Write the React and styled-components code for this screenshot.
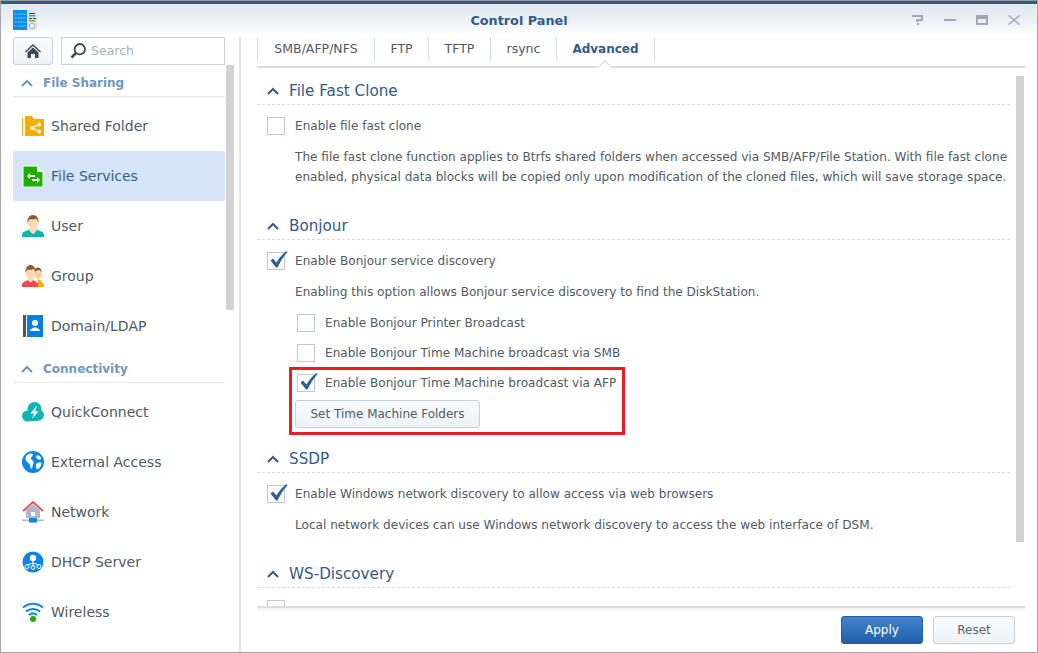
import React from "react";
import styled, { createGlobalStyle } from "styled-components";

const Global = createGlobalStyle`
  html, body { margin: 0; padding: 0; background: #fff; }
  body { font-family: "DejaVu Sans", Verdana, sans-serif; font-size: 12px; color: #505a64; }
  * { box-sizing: border-box; }
`;

const Frame = styled.div`
  width: 1038px; height: 653px; display: flex; flex-direction: column;
  border: 1px solid #a6a6a6; border-top-color: #9a9a9a; overflow: hidden; background: #fff;
`;
const TopBar = styled.div`height: 3px; background: #2c5b8d; flex: none;`;
const Header = styled.header`
  height: 33px; flex: none; position: relative; display: flex; align-items: center;
  padding: 0 17px 1px 12px; justify-content: space-between;
  background: linear-gradient(#e1e8f2, #eef2f7 55%, #ffffff 95%);
`;
const Title = styled.div`
  position: absolute; left: 0; right: 0; top: 9px; text-align: center;
  font-weight: bold; font-size: 12.8px; color: #2f5c8c;
`;
const Logo = styled.svg`width: 24px; height: 20px; display: block; margin-top: -1px;`;
const Controls = styled.div`display: flex; gap: 20px; align-items: center;`;
const Ctl = styled.svg`width: 12px; height: 10px; display: block; color: #a3a9b2;`;

const Body = styled.div`flex: 1; display: flex; min-height: 0;`;
const Side = styled.aside`
  width: 240px; flex: none; display: flex; padding-left: 12px;
  border-right: 2px solid #e6e6e6; overflow: hidden;
`;
const SideCol = styled.div`width: 212px; flex: none; display: flex; flex-direction: column;`;
const SideBar = styled.div`width: 8px; height: 245px; margin: 28px 0 0 1px; background: #d3d3d5; flex: none;`;
const SearchRow = styled.div`display: flex; gap: 8px; height: 28px; flex: none;`;
const HomeBtn = styled.div`
  width: 40px; height: 28px; border: 1px solid #c5d1de; border-radius: 3px;
  background: linear-gradient(#fafcfe, #eef3f8); display: flex; align-items: center; justify-content: center;
`;
const Search = styled.div`
  flex: 1; border: 1px solid #c5d1de; display: flex; align-items: center; gap: 5px;
  padding-left: 8px; color: #a9b0b8; font-size: 12.5px; padding-bottom: 1px;
`;
const SecHead = styled.div`
  height: 32px; flex: none; display: flex; align-items: center; gap: 10px; padding: 5px 0 0 8px;
  border-bottom: 1px solid #e7ebf0; margin-bottom: 4px;
  color: #6f97bd; font-weight: bold; font-size: 12px;
`;
const Item = styled.div`
  height: 50px; flex: none; display: flex; align-items: center; gap: 7px; padding-left: 9px;
  font-size: 14px; border-radius: 3px;
  color: ${p => (p.$active ? "#34608f" : "#505a64")};
  background: ${p => (p.$active ? "#d5e5f7" : "transparent")};
`;
const ItemIcon = styled.svg`width: 22px; height: 22px; display: block; flex: none;`;

const Main = styled.main`flex: 1; min-width: 0; display: flex; flex-direction: column; padding-left: 16px; padding-right: 12px;`;
const Tabs = styled.nav`
  height: 31px; flex: none; display: flex; align-items: flex-start;
  border-bottom: 2px solid #dcdcdc; position: relative;
`;
const Tab = styled.div`
  height: 24px; width: ${p => p.$w}px; display: flex; align-items: center; justify-content: center;
  border-left: 1px solid #d6e0ea;
  ${p => p.$last && "border-right: 1px solid #d6e0ea;"}
  padding-bottom: ${p => (p.$active ? "1px" : "2px")};
  font-size: ${p => (p.$active ? "12px" : "12.5px")};
  font-weight: ${p => (p.$active ? "bold" : "normal")};
  color: ${p => (p.$active ? "#2f5c8c" : "#50595f")};
`;
const Notch = styled.div`
  position: absolute; left: 343px; bottom: -2px; width: 10px; height: 7px; background: #fff;
  &::before {
    content: ""; position: absolute; left: 0; top: 1px; width: 9px; height: 9px;
    transform: rotate(45deg); border-left: 1px solid #dcdcdc; border-top: 1px solid #dcdcdc; background: #fff;
  }
`;
const Scroller = styled.div`flex: 1; min-height: 0; display: flex; overflow: hidden;`;
const Content = styled.div`width: 753px; flex: none; overflow: hidden; padding-top: 8px;`;
const MainBar = styled.div`width: 8px; height: 466px; margin: 8px 0 0 6px; background: #d3d3d5; flex: none;`;
const Section = styled.section`margin-bottom: ${p => p.$mb ?? 0}px;`;
const SecTitle = styled.div`
  height: 29px; display: flex; align-items: center; gap: 10px; padding: 1px 0 0 10px;
  border-bottom: 1px dashed #d5dde8; color: #32598a; font-size: 15.2px;
`;
const Row = styled.div`
  height: ${p => p.$h ?? 30}px; display: flex; align-items: center; gap: 10px;
  padding-left: ${p => p.$indent ?? 10}px; font-size: 12.08px; color: #505a64;
`;
const Box = styled.span`
  width: 18px; height: 18px; flex: none; position: relative; display: block;
  border: 1px solid #bcc8d6; background: #fff;
`;
const Tick = styled.svg`position: absolute; left: 1px; top: -4px; width: 20px; height: 20px; overflow: visible;`;
const Desc = styled.p`
  margin: 0 0 ${p => p.$mb ?? 0}px; padding-left: 38px; font-size: 12.08px; line-height: 20px;
  color: #505a64; white-space: nowrap;
`;
const Highlight = styled.div`
  margin: -1px 0 0 32px; width: 336px; height: 68px; border: 3px solid #ed1c24;
`;
const Btn = styled.div`
  width: 185px; height: 28px; margin: 4px 0 0 3px; border: 1px solid #c5d1de; border-radius: 3px;
  background: linear-gradient(#f8fbfe, #eef3f8); display: flex; align-items: center; justify-content: center;
  font-size: 12px; color: #505a64;
`;
const Footer = styled.footer`
  height: 46px; flex: none; border-top: 2px solid #dcdcdc; display: flex; justify-content: flex-end; gap: 10px;
  padding: 8px 10px 0 0;
  background: linear-gradient(#f4f4f4, #ffffff 6px);
`;
const FootBtn = styled.div`
  width: 82px; height: 28px; border-radius: 3px; display: flex; align-items: center; justify-content: center;
  font-size: 12px;
  ${p => p.$primary
    ? "background: linear-gradient(#4183cd, #2160a9); border: 1px solid #215da3; color: #fff;"
    : "background: linear-gradient(#f8fbfe, #eef3f8); border: 1px solid #c5d1de; color: #5a646e;"}
`;

const Chevron = ({ color = "#6f97bd" }) => (
  <svg width="12" height="8" viewBox="0 0 12 8" style={{ display: "block", flex: "none" }}>
    <path d="M1 7 L6 2 L11 7" fill="none" stroke={color} strokeWidth="2" />
  </svg>
);
const CheckBox = ({ on }) => (
  <Box>
    {on && (
      <Tick viewBox="0 0 20 20">
        <path d="M1.5 11.5 L4 9.5 L7.5 13.5 Q11 7 17.5 2 L18.5 3 Q12.5 9.5 8.5 18.5 L7 18.5 Z" fill="#2d5f96" />
      </Tick>
    )}
  </Box>
);

const icons = {
  folder: (
    <>
      <path d="M0 3h1v18H0z" fill="#fbb216" />
      <path d="M3 1h7l2 3h10v17H3z" fill="#fdab00" />
      <circle cx="10" cy="13" r="2" fill="#fff" />
      <circle cx="17" cy="9.5" r="2" fill="#fff" />
      <circle cx="17" cy="16.5" r="2" fill="#fff" />
      <path d="M10 13L17 9.5M10 13l7 3.5" stroke="#fff" strokeWidth="1.3" />
    </>
  ),
  files: (
    <>
      <path d="M1 1h14l6 6v15H1z" fill="#1fae00" stroke="#fff" strokeWidth="1" />
      <path d="M15 1l6 6h-6z" fill="#e8f7e0" />
      <path d="M5 11l3-3v2h5v2H8v2zM18 15l-3-3v2h-5v2h5v2z" fill="#fff" />
    </>
  ),
  user: (
    <>
      <path d="M0 22v-3c1-3 5-3 7-4.5h8c2 1.500 6 1.500 7 4.500v3z" fill="#10b5b3" />
      <path d="M7.500 13h7v3l-3.500 3.500L7.500 16z" fill="#fbd9b5" />
      <ellipse cx="11" cy="8" rx="5" ry="6.500" fill="#fbd9b5" />
      <path d="M5.500 8C5 3 7.500 0 11 0s6 3 5.500 8c-.5-2-1.500-4-2.500-4.500-2 1-4.500 1-6 .5C7 5 6 6.500 5.500 8z" fill="#8a5a33" />
    </>
  ),
  group: (
    <>
      <ellipse cx="16" cy="9" rx="3.500" ry="5" fill="#f7cfa5" />
      <path d="M12 7c0-3 2-4.500 4-4.500s4 2 3.500 5.500c-.5-1.500-1-2.500-2-3-2 .5-4 .5-5.500 2z" fill="#8a5a33" />
      <path d="M16 14l3 2 3 4v2h-7z" fill="#fdab00" />
      <path d="M0 22v-3c1-2.500 4-3 6-4h5c2 1 4 1.500 5 4v3z" fill="#ef4a4f" />
      <path d="M5.500 12h6v3l-3 2.500-3-2.500z" fill="#fbd9b5" />
      <ellipse cx="8.500" cy="7.500" rx="4.800" ry="6" fill="#fbd9b5" />
      <path d="M3.500 8C3 3 5.500 0 8.500 0s5.500 3 5 8c-.5-2-1-3.500-2-4-2 1-4 1-6 .5-.8.8-1.500 2-2 3.500z" fill="#8a5a33" />
    </>
  ),
  domain: (
    <>
      <path d="M1 0h3v22H1z" fill="#4a5766" />
      <path d="M5 0h16v22H5z" fill="#0a7fe2" />
      <circle cx="13" cy="8" r="3" fill="#fff" />
      <path d="M8 16c0-2 3-2.500 3.500-3.500h3c.5 1 3.500 1.500 3.500 3.500z" fill="#fff" />
    </>
  ),
  quick: (
    <>
      <circle cx="5.500" cy="15" r="5.500" fill="#10b5b3" />
      <circle cx="12.500" cy="8" r="7" fill="#10b5b3" />
      <circle cx="16.500" cy="14" r="5.500" fill="#10b5b3" />
      <path d="M6 12h10v8H6z" fill="#10b5b3" />
      <path d="M14.500 5l-6 7.500h3.500l-2 5.500 6.500-7.500h-3.500l2-5.500z" fill="#fff" />
    </>
  ),
  globe: (
    <>
      <circle cx="11" cy="11" r="11" fill="#0a85e6" />
      <path d="M5 4c3-2 5-1.500 6-1 0 2-1.500 2.500-2 4s1.500 2 2.500 3.500-1 2.500-1 5-1.500 3-2 1-.5-3.500-2-4.500S3.500 9.500 3.500 8 4 5 5 4zM14 5c2-1.500 4-.5 5 2 .5 2-1 1.500-2 1.500s-3.500-2-3-3.500zM15 12c2-1 4-1 4.500 0s-1.500 5-3 6-2.500-.5-2.500-2 0-3.500 1-4z" fill="#fff" />
    </>
  ),
  network: (
    <>
      <path d="M4 9l7-6 7 6v8H4z" fill="#b0b8c4" />
      <path d="M1 10l10-9 10 9" fill="none" stroke="#ef4a4f" strokeWidth="1.800" />
      <path d="M0 18.500h22V20H0z" fill="#b0b8c4" />
      <path d="M7 17h8v4.500H7z" fill="#0a85e6" />
      <path d="M9 11h4v4H9z" fill="#fff" />
    </>
  ),
  dhcp: (
    <>
      <circle cx="11" cy="11" r="10.500" fill="#0a85e6" />
      <circle cx="11" cy="7" r="3.200" fill="#fff" />
      <path d="M11 9v7M5 14l6-2 6 2" stroke="#fff" strokeWidth="1" fill="none" />
      <circle cx="5" cy="15.500" r="2" fill="none" stroke="#fff" />
      <circle cx="11" cy="16.500" r="2" fill="none" stroke="#fff" />
      <circle cx="17" cy="15.500" r="2" fill="none" stroke="#fff" />
    </>
  ),
  wifi: (
    <>
      <path d="M1 6.500C7 1.500 15 1.500 21 6.500" fill="none" stroke="#0a85e6" strokeWidth="2" />
      <path d="M4 10.500C8 7 14 7 18 10.500" fill="none" stroke="#0a85e6" strokeWidth="2" />
      <path d="M7 14C9.500 12 12.500 12 15 14" fill="none" stroke="#0a85e6" strokeWidth="2" />
      <circle cx="11" cy="18" r="3" fill="#1fae00" />
    </>
  ),
};

const SideItem = ({ icon, label, active }) => (
  <Item $active={active}>
    <ItemIcon viewBox="0 0 22 22">{icons[icon]}</ItemIcon>
    <span>{label}</span>
  </Item>
);

export default function App() {
  return (
    <>
      <Global />
      <Frame>
        <TopBar />
        <Header>
          <Logo viewBox="0 0 24 20">
            <path d="M0 0h14v20H0z" fill="#0d8ee8" />
            <path d="M1 4h3M1 8h3M1 12h3M1 16h3M5 4h8M5 8h8M5 12h8M5 16h8" stroke="#5fb8f2" strokeWidth="1" />
            <path d="M14 0h10v20H14z" fill="#dfe3e6" />
            <path d="M16 3h6v1h-6z" fill="#333f4c" />
            <path d="M16 5h6v1.500h-6z" fill="#17a8d8" />
            <path d="M16 8h3v1h-3zM20 8h3v1h-3z" fill="#333f4c" />
            <path d="M16 10h6v1.500h-6z" fill="#7ab51d" />
            <circle cx="19" cy="16" r="2.500" fill="#fff" stroke="#9aa4ad" />
          </Logo>
          <Title>Control Panel</Title>
          <Controls>
            <Ctl viewBox="0 0 12 10">
              <path d="M0 1h10v4H5v2" fill="none" stroke="currentColor" strokeWidth="2" />
              <path d="M5 8h2v2H5z" fill="currentColor" />
            </Ctl>
            <Ctl viewBox="0 0 12 10"><path d="M0 4h12v2H0z" fill="currentColor" /></Ctl>
            <Ctl viewBox="0 0 12 10">
              <path d="M0 0h12v10H0zM2 4v4h8V4z" fill="currentColor" fillRule="evenodd" />
            </Ctl>
            <Ctl viewBox="0 0 12 10">
              <path d="M1 0l5 4 5-4 1 1-5 4 5 4-1 1-5-4-5 4-1-1 5-4-5-4z" fill="currentColor" />
            </Ctl>
          </Controls>
        </Header>
        <Body>
          <Side>
            <SideCol>
              <SearchRow>
                <HomeBtn>
                  <svg width="16" height="16" viewBox="0 0 16 16">
                    <path d="M8 1L0 8.500l1 1L8 3l7 6.500 1-1z" fill="#3d4a57" />
                    <path d="M2.500 9.500L8 4.500l5.500 5V15H10v-4H6v4H2.500z" fill="#3d4a57" />
                  </svg>
                </HomeBtn>
                <Search>
                  <svg width="16" height="16" viewBox="0 0 16 16" style={{ flex: "none" }}>
                    <circle cx="9.800" cy="6.200" r="5.200" fill="none" stroke="#3f4a55" strokeWidth="1.800" />
                    <path d="M6 10l-4.500 4.500" stroke="#3f4a55" strokeWidth="2.500" />
                  </svg>
                  <span>Search</span>
                </Search>
              </SearchRow>
              <SecHead><Chevron /><span>File Sharing</span></SecHead>
              <SideItem icon="folder" label="Shared Folder" />
              <SideItem icon="files" label="File Services" active />
              <SideItem icon="user" label="User" />
              <SideItem icon="group" label="Group" />
              <SideItem icon="domain" label="Domain/LDAP" />
              <SecHead><Chevron /><span>Connectivity</span></SecHead>
              <SideItem icon="quick" label="QuickConnect" />
              <SideItem icon="globe" label="External Access" />
              <SideItem icon="network" label="Network" />
              <SideItem icon="dhcp" label="DHCP Server" />
              <SideItem icon="wifi" label="Wireless" />
            </SideCol>
            <SideBar />
          </Side>
          <Main>
            <Tabs>
              <Tab $w={117}>SMB/AFP/NFS</Tab>
              <Tab $w={54}>FTP</Tab>
              <Tab $w={62}>TFTP</Tab>
              <Tab $w={66}>rsync</Tab>
              <Tab $w={99} $active $last>Advanced</Tab>
              <Notch />
            </Tabs>
            <Scroller>
              <Content>
                <Section $mb={24}>
                  <SecTitle><Chevron color="#32598a" /><span>File Fast Clone</span></SecTitle>
                  <Row $h={42}><CheckBox /><span>Enable file fast clone</span></Row>
                  <Desc>
                    The file fast clone function applies to Btrfs shared folders when accessed via SMB/AFP/File Station. With file fast clone<br />
                    enabled, physical data blocks will be copied only upon modification of the cloned files, which will save storage space.
                  </Desc>
                </Section>
                <Section $mb={9}>
                  <SecTitle><Chevron color="#32598a" /><span>Bonjour</span></SecTitle>
                  <Row $h={42}><CheckBox on /><span>Enable Bonjour service discovery</span></Row>
                  <Desc $mb={6}>Enabling this option allows Bonjour service discovery to find the DiskStation.</Desc>
                  <Row $indent={40}><CheckBox /><span>Enable Bonjour Printer Broadcast</span></Row>
                  <Row $indent={40}><CheckBox /><span>Enable Bonjour Time Machine broadcast via SMB</span></Row>
                  <Highlight>
                    <Row $indent={5} $h={26}><CheckBox on /><span>Enable Bonjour Time Machine broadcast via AFP</span></Row>
                    <Btn>Set Time Machine Folders</Btn>
                  </Highlight>
                </Section>
                <Section $mb={24}>
                  <SecTitle><Chevron color="#32598a" /><span>SSDP</span></SecTitle>
                  <Row $h={42}><CheckBox on /><span>Enable Windows network discovery to allow access via web browsers</span></Row>
                  <Desc>Local network devices can use Windows network discovery to access the web interface of DSM.</Desc>
                </Section>
                <Section>
                  <SecTitle><Chevron color="#32598a" /><span>WS-Discovery</span></SecTitle>
                  <Row $h={42}><CheckBox /></Row>
                </Section>
              </Content>
              <MainBar />
            </Scroller>
            <Footer>
              <FootBtn $primary>Apply</FootBtn>
              <FootBtn>Reset</FootBtn>
            </Footer>
          </Main>
        </Body>
      </Frame>
    </>
  );
}
